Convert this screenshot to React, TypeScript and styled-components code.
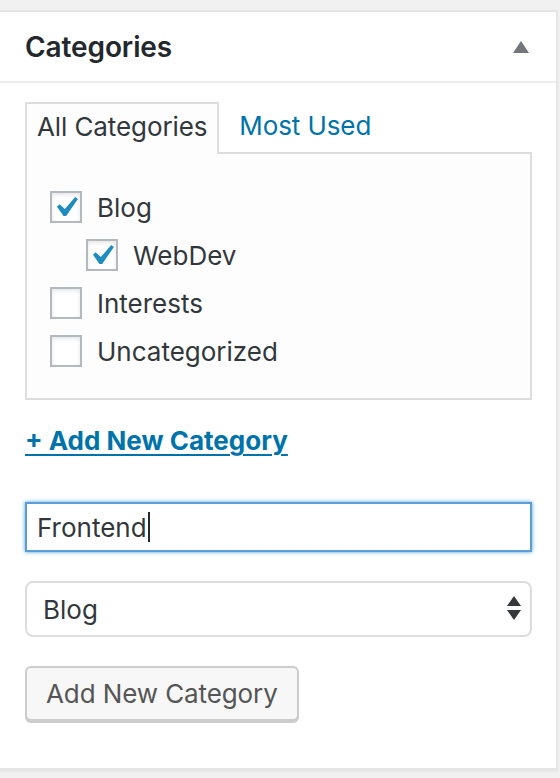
import React from 'react';
import styled, { createGlobalStyle } from 'styled-components';

const GlobalStyle = createGlobalStyle`
  html, body {
    margin: 0;
    padding: 0;
    background: #f1f1f1;
  }
  body {
    font-family: Inter, "Liberation Sans", Arial, sans-serif;
    -webkit-font-smoothing: antialiased;
  }
`;

const Page = styled.div`
  padding-top: 10px;
  height: 778px;
  box-sizing: border-box;
  overflow: hidden;
`;

const Postbox = styled.div`
  margin-left: -2px;
  width: 560px;
  height: 760px;
  box-sizing: border-box;
  background: #fff;
  border: 2px solid #e5e5e5;
  box-shadow: 0 2px 2px rgba(0, 0, 0, 0.04);
  display: flex;
  flex-direction: column;
`;

const Header = styled.div`
  height: 69px;
  display: flex;
  align-items: center;
  justify-content: space-between;
  padding: 0 27px 0 25px;
  border-bottom: 2px solid #eee;
`;

const Title = styled.h2`
  margin: 0;
  font-size: 28px;
  font-weight: 600;
  color: #23282d;
  letter-spacing: -0.1px;
`;

const ToggleIcon = () => (
  <svg width="16" height="12" viewBox="0 0 16 12">
    <polygon points="8,0 16,12 0,12" fill="#72777c" />
  </svg>
);

const Inside = styled.div`
  padding: 19px 24px 0 25px;
  display: flex;
  flex-direction: column;
`;

const TabBar = styled.div`
  display: flex;
  align-items: flex-start;
  height: 50px;
  position: relative;
  z-index: 1;
`;

const Tab = styled.div<{ $active?: boolean }>`
  box-sizing: border-box;
  padding: 0 10px 5px 10px;
  margin-right: 8px;
  display: flex;
  align-items: center;
  font-size: 26px;
  letter-spacing: -0.1px;
  border: 2px solid ${p => (p.$active ? '#ddd' : 'transparent')};
  border-bottom: none;
  background: ${p => (p.$active ? '#fdfdfd' : 'transparent')};
  color: ${p => (p.$active ? '#32373c' : '#0073aa')};
  height: ${p => (p.$active ? '52px' : '50px')};
`;

const TabPanel = styled.div`
  border: 2px solid #ddd;
  background: #fdfdfd;
  height: 248px;
  box-sizing: border-box;
  padding: 37px 0 0 23px;
  display: flex;
  flex-direction: column;
  gap: 16px;
`;

const Row = styled.label<{ $level?: number }>`
  display: flex;
  align-items: center;
  gap: 15px;
  padding-left: ${p => (p.$level || 0) * 36}px;
  font-size: 26px;
  color: #32373c;
  height: 32px;
`;

const Box = styled.span`
  position: relative;
  width: 32px;
  height: 32px;
  box-sizing: border-box;
  border: 2px solid #b4b9be;
  background: #fff;
  box-shadow: inset 0 2px 4px rgba(0, 0, 0, 0.1);
  flex-shrink: 0;

  svg {
    position: absolute;
    left: 4px;
    top: 3px;
  }
`;

const CheckIcon = () => (
  <svg width="23" height="21" viewBox="5.3 4.4 11.4 10.3">
    <path d="M14.83 4.89l1.34.94-5.81 8.38H9.02L5.78 9.67l1.34-1.25 2.57 2.4z" fill="#1e8cbe" />
  </svg>
);

const Checkbox: React.FC<{ checked?: boolean }> = ({ checked }) => (
  <Box>{checked && <CheckIcon />}</Box>
);

const AddLink = styled.a`
  margin-top: 25px;
  font-size: 26px;
  font-weight: 700;
  color: #0073aa;
  text-decoration: underline;
  text-underline-offset: 4px;
  text-decoration-thickness: 2px;
  align-self: flex-start;
  line-height: 32px;
`;

const TextField = styled.div`
  margin-top: 45px;
  height: 50px;
  box-sizing: border-box;
  border: 2px solid #5b9dd9;
  box-shadow: 0 0 4px rgba(30, 140, 190, 0.8);
  background: #fff;
  display: flex;
  align-items: center;
  padding-left: 10px;
  font-size: 26px;
  color: #32373c;
`;

const Caret = styled.span`
  display: inline-block;
  width: 2px;
  height: 30px;
  background: #23282d;
  margin-left: 1px;
`;

const SelectBox = styled.div`
  margin-top: 29px;
  height: 56px;
  box-sizing: border-box;
  border: 2px solid #ddd;
  border-radius: 8px;
  background: #fff;
  display: flex;
  align-items: center;
  justify-content: space-between;
  padding: 0 9px 0 16px;
  font-size: 26px;
  color: #32373c;
`;

const SelectArrows = () => (
  <svg width="14" height="26" viewBox="0 0 14 26">
    <polygon points="7,0 14,10 0,10" fill="#32373c" />
    <polygon points="0,14 14,14 7,24" fill="#32373c" />
  </svg>
);

const Button = styled.button`
  margin-top: 29px;
  align-self: flex-start;
  height: 55px;
  padding: 0 19px;
  box-sizing: border-box;
  border: 2px solid #ccc;
  border-radius: 6px;
  background: #f7f7f7;
  box-shadow: 0 2px 0 #ccc;
  font-family: inherit;
  font-size: 26px;
  letter-spacing: -0.1px;
  color: #555;
  cursor: pointer;
`;

const categories = [
  { name: 'Blog', checked: true, level: 0 },
  { name: 'WebDev', checked: true, level: 1 },
  { name: 'Interests', checked: false, level: 0 },
  { name: 'Uncategorized', checked: false, level: 0 },
];

export default function App() {
  return (
    <>
      <GlobalStyle />
      <Page>
        <Postbox>
          <Header>
            <Title>Categories</Title>
            <ToggleIcon />
          </Header>
          <Inside>
            <TabBar>
              <Tab $active>All Categories</Tab>
              <Tab>Most Used</Tab>
            </TabBar>
            <TabPanel>
              {categories.map(c => (
                <Row key={c.name} $level={c.level}>
                  <Checkbox checked={c.checked} />
                  {c.name}
                </Row>
              ))}
            </TabPanel>
            <AddLink href="#">+ Add New Category</AddLink>
            <TextField>
              Frontend
              <Caret />
            </TextField>
            <SelectBox>
              Blog
              <SelectArrows />
            </SelectBox>
            <Button>Add New Category</Button>
          </Inside>
        </Postbox>
      </Page>
    </>
  );
}
